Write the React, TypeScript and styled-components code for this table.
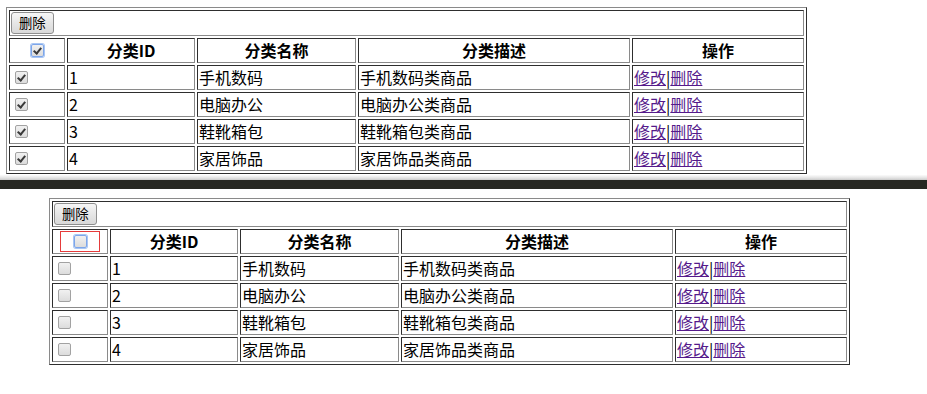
import React from "react";
import styled, { createGlobalStyle, css } from "styled-components";

const Global = createGlobalStyle`
  html, body { margin: 0; padding: 0; background: #fff; }
  body {
    font-family: "Microsoft YaHei", "Noto Sans CJK SC", "Noto Sans", sans-serif;
    font-size: 16px;
    color: #000;
  }
`;

const Page = styled.div`
  width: 927px;
  height: 394px;
  overflow: hidden;
  display: flex;
  flex-direction: column;
`;

const Shot = styled.section<{ $top: number; $left: number; $h?: number }>`
  box-sizing: border-box;
  padding: ${(p) => p.$top}px 0 0 ${(p) => p.$left}px;
  ${(p) => (p.$h ? `height: ${p.$h}px;` : "")}
  flex: none;
`;

const Shade = styled.div`
  height: 5px;
  flex: none;
  background: linear-gradient(#fbfbfb, #e2e2e2 60%, #c9c9c9);
`;

const Bar = styled.div`
  height: 9px;
  flex: none;
  background: #272822;
`;

const Grid = styled.table`
  border-collapse: separate;
  border-spacing: 2px;
  width: 801px;
  border: 1px solid;
  border-color: #8a8a8a #2e2e2e #2e2e2e #8a8a8a;
`;

const cellCss = css`
  box-sizing: border-box;
  border: 1px solid;
  border-color: #2e2e2e #8a8a8a #8a8a8a #2e2e2e;
  padding: 1px;
  height: 25px;
  line-height: 21px;
  font-size: 16px;
  vertical-align: middle;
  white-space: nowrap;
`;

const Cell = styled.td`
  ${cellCss}
  text-align: left;
`;

const ToolCell = styled.td`
  ${cellCss}
  height: 26px;
`;

const HeadCell = styled.th<{ $w: number }>`
  ${cellCss}
  width: ${(p) => p.$w}px;
  text-align: center;
  font-weight: bold;
`;

const DelButton = styled.button`
  display: block;
  margin: 0;
  height: 22px;
  padding: 0 7px;
  font-family: "Microsoft YaHei", "Noto Sans CJK SC", sans-serif;
  font-size: 13.33px;
  line-height: 18px;
  color: #000;
  border: 1px solid #8e8e8e;
  border-radius: 3px;
  background: linear-gradient(#f6f6f6, #e6e6e6 50%, #d9d9d9);
`;

const Check = styled.input.attrs({ type: "checkbox" })<{ $focus?: boolean; $center?: boolean }>`
  appearance: none;
  -webkit-appearance: none;
  box-sizing: border-box;
  width: 13px;
  height: 13px;
  margin: ${(p) => (p.$center ? "0" : "0 0 0 4px")};
  display: block;
  position: relative;
  border: 1px solid #a2a2a2;
  border-radius: 2px;
  background: linear-gradient(#f1f1f1, #dcdcdc);
  &:checked::after {
    content: "";
    position: absolute;
    left: 3px;
    top: 1px;
    width: 3px;
    height: 6px;
    border: solid #3a3a3a;
    border-width: 0 2px 2px 0;
    transform: rotate(40deg);
  }
  ${(p) =>
    p.$focus &&
    css`
      border-color: #7da6ea;
      box-shadow: 0 0 0 1px #a9c6f3;
    `}
`;

const CheckWrap = styled.div<{ $marked?: boolean }>`
  box-sizing: border-box;
  display: flex;
  align-items: center;
  justify-content: center;
  margin: 0 auto;
  width: 40px;
  height: 21px;
  border: 1px solid ${(p) => (p.$marked ? "#e53b3b" : "transparent")};
`;

const Action = styled.a`
  color: #551a8b;
  text-decoration: underline;
  cursor: pointer;
`;

const rows = [
  { id: 1, name: "手机数码", desc: "手机数码类商品" },
  { id: 2, name: "电脑办公", desc: "电脑办公类商品" },
  { id: 3, name: "鞋靴箱包", desc: "鞋靴箱包类商品" },
  { id: 4, name: "家居饰品", desc: "家居饰品类商品" },
];

function CategoryTable({ checked, marked }: { checked: boolean; marked: boolean }) {
  return (
    <Grid>
      <tbody>
        <tr>
          <ToolCell colSpan={5}>
            <DelButton type="button">删除</DelButton>
          </ToolCell>
        </tr>
        <tr>
          <HeadCell $w={56}>
            <CheckWrap $marked={marked}>
              <Check $center $focus defaultChecked={checked} />
            </CheckWrap>
          </HeadCell>
          <HeadCell $w={128}>分类ID</HeadCell>
          <HeadCell $w={159}>分类名称</HeadCell>
          <HeadCell $w={272}>分类描述</HeadCell>
          <HeadCell $w={172}>操作</HeadCell>
        </tr>
        {rows.map((r) => (
          <tr key={r.id}>
            <Cell>
              <Check defaultChecked={checked} />
            </Cell>
            <Cell>{r.id}</Cell>
            <Cell>{r.name}</Cell>
            <Cell>{r.desc}</Cell>
            <Cell>
              <Action>修改</Action>|<Action>删除</Action>
            </Cell>
          </tr>
        ))}
      </tbody>
    </Grid>
  );
}

export default function App() {
  return (
    <Page>
      <Global />
      <Shot $top={7} $left={6} $h={175}>
        <CategoryTable checked marked={false} />
      </Shot>
      <Shade />
      <Bar />
      <Shot $top={9} $left={49}>
        <CategoryTable checked={false} marked />
      </Shot>
    </Page>
  );
}
